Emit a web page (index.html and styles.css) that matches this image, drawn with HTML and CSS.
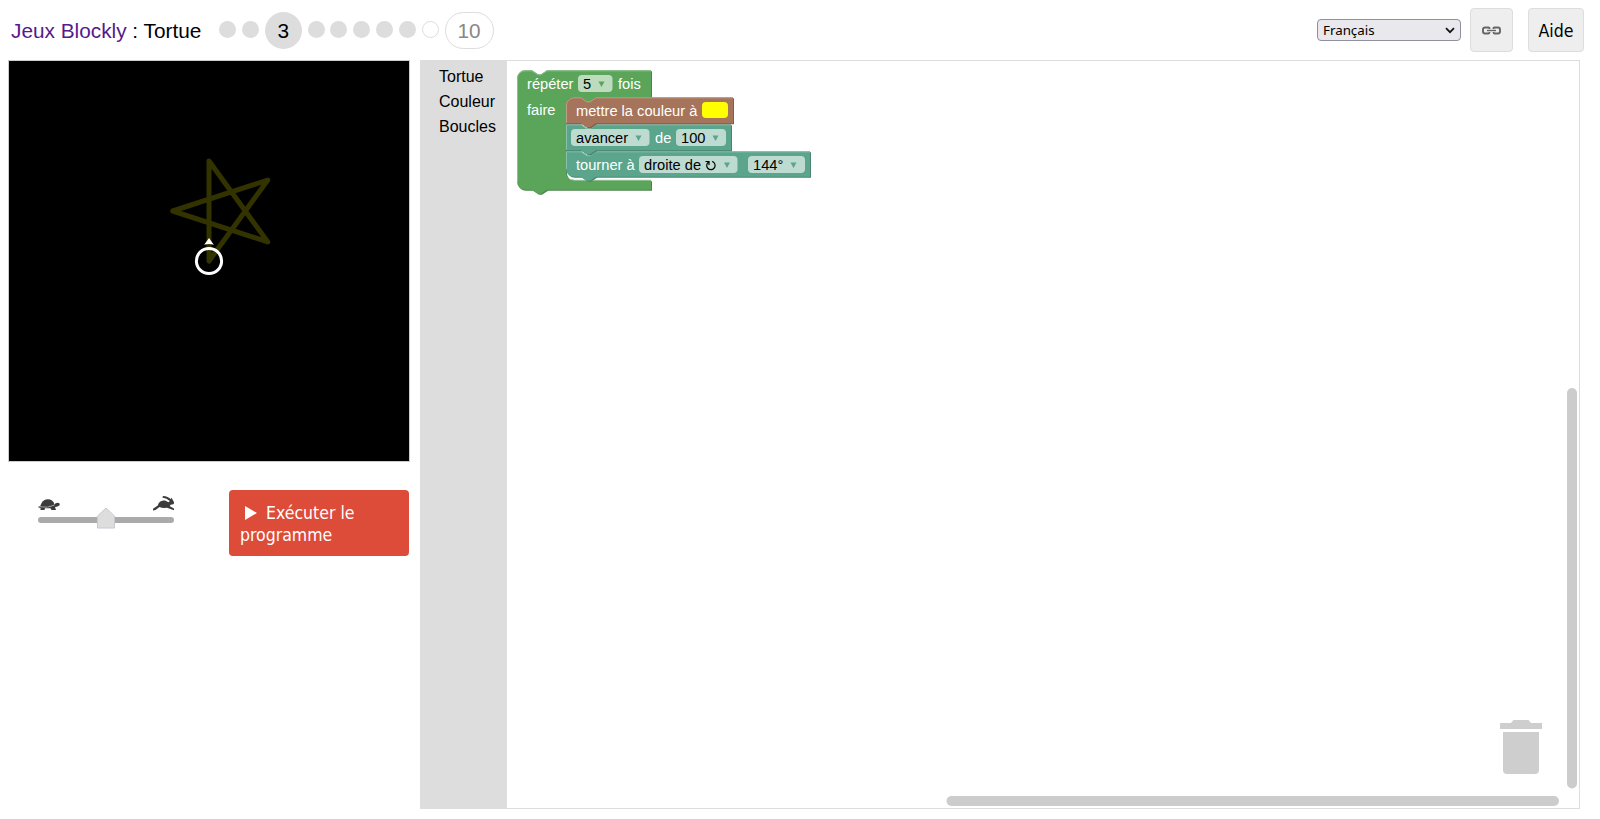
FILE: index.html
```html
<!DOCTYPE html>
<html lang="fr">
<head>
<meta charset="utf-8">
<title>Jeux Blockly : Tortue</title>
<link rel="stylesheet" href="styles.css">
</head>
<body>
<header class="header">
  <h1 class="title"><a class="home">Jeux Blockly</a> : Tortue</h1>
  <nav class="levels">
    <span class="dot"></span><span class="dot"></span>
    <span class="level current">3</span>
    <span class="dot"></span><span class="dot"></span><span class="dot"></span><span class="dot"></span><span class="dot"></span>
    <span class="dot open"></span>
    <span class="level last">10</span>
  </nav>
  <div class="tools">
    <div class="language"><span>Français</span>
      <svg width="10" height="7" viewBox="0 0 10 7"><path d="M1 1.2 5 5.2 9 1.2" fill="none" stroke="#111" stroke-width="1.7"/></svg>
    </div>
    <button class="button link" aria-label="Lien">
      <svg width="19" height="9" viewBox="0 0 19 9" fill="none" stroke="#666" stroke-width="1.900"><path d="M7.500 3V2.500Q7.500 1.500 6.500 1.500H3Q1 1.500 1 3.500V5.500Q1 7.500 3 7.500H6.500Q7.500 7.500 7.500 6M11.500 3V2.500Q11.500 1.500 12.500 1.500H16Q18 1.500 18 3.500V5.500Q18 7.500 16 7.500H12.500Q11.500 7.500 11.500 6"/><path d="M5 4.500H14" stroke-width="1.400"/></svg>
    </button>
    <button class="button help">Aide</button>
  </div>
</header>
<main class="main">
  <section class="stage">
    <svg class="canvas" width="400" height="400" viewBox="0 0 400 400">
      <path class="star" d="M200 200V100L258.8 180.9L163.7 150L258.8 119.1Z"/>
      <circle cx="200" cy="200" r="12.6" fill="none" stroke="#fff" stroke-width="3"/>
      <path d="M200 177 204.8 183.8Q200 182 195.2 183.8Z" fill="#fff"/>
    </svg>
    <div class="controls">
      <svg class="slider" width="150" height="50" viewBox="0 0 150 50">
        <path d="M10 27H140" stroke="#aaa" stroke-width="6" stroke-linecap="round"/>
        <path d="M66.500 35V23L75 15 83.500 23V35Z" fill="#ddd" stroke="#c8c6d2"/>
        <g fill="#3b3b3b"><path d="M9 13.500Q11 6.500 16.500 6.200Q22 6.200 23.500 11.500Q21 14 13 14.300Z"/><path d="M22.500 12.500Q24 9.800 26.500 9.800Q29.500 10.200 28.500 12.300Q27 14 24 14L25 17H20.500L19.500 15.300H14L13.500 17H9.500V15L7.500 14.500V13.300Q17 15.500 22.500 12.500Z"/></g>
        <path d="M9 13.800Q17 15.300 23.500 12" fill="none" stroke="#aaa" stroke-width=".8"/>
        <path fill="#3b3b3b" d="M127.500 10.500Q129.500 7 134 7.500L137.500 9.200 138.800 8Q136 5.500 131.300 4.600L132 3Q137 3.200 140 6.300L140.600 4.500 142 7.500Q144 10 142.300 11.200L139.500 11.800 138.800 13.300 143 15.500V17.200L136 14.800Q131 15.300 128.500 14L124.500 16.900 122 17.400V15.700L126.800 12.500Z"/>
      </svg>
      <button class="run"><svg width="14" height="16" viewBox="0 0 14 16"><path d="M1 1V15L13 8Z" fill="#fff"/></svg>Exécuter le programme</button>
    </div>
  </section>
  <section class="blockly">
    <ul class="toolbox"><li>Tortue</li><li>Couleur</li><li>Boucles</li></ul>
    <svg class="workspace" width="1072" height="747" viewBox="507 61 1072 747">
      <defs>
        <path id="loop" d="M517.500 78.500A8 8 0 0 1 525.500 70.500H532.500L538.500 74.500H541.500L547.500 70.500H651.500V97.500H596.500L590.500 101.500H587.500L581.500 97.500H574.500A8 8 0 0 0 566.500 105.500V172.500A8 8 0 0 0 574.500 180.500H651.500V190H547.500L541.500 194H538.500L532.500 190H525.500A8 8 0 0 1 517.500 182Z"/>
        <path id="colour" d="M566.500 105.500A8 8 0 0 1 574.500 97.500H581.500L587.500 101.500H590.500L596.500 97.500H733.500V123.500H596.500L590.500 127.500H587.500L581.500 123.500H566.500Z"/>
        <path id="move" d="M566.500 124.500H581.500L587.500 128.500H590.500L596.500 124.500H731.500V150.500H596.500L590.500 154.500H587.500L581.500 150.500H566.500Z"/>
        <path id="turn" d="M566.500 151.500H581.500L587.500 155.500H590.500L596.500 151.500H810.500V177H596.500L590.500 181H587.500L581.500 177H574.500A8 8 0 0 1 566.500 169Z"/>
      </defs>
      <g transform="translate(-.5 -.2)">
      <use href="#loop" x="1" y="1" fill="#498449"/><use href="#loop" fill="#5ba55b"/>
      <path class="shine" stroke="#8cc08c" d="M518 182V78.500A7.500 7.500 0 0 1 525.500 71H532.500L538.500 75H541.500L547.500 71H651.500M572 179.500L574.500 180.500H651.500"/>
      <use href="#turn" x="1" y="1" fill="#498470"/><use href="#turn" fill="#5ba58c"/>
      <path class="shine" stroke="#8cc0ae" d="M567 169V152H581.500L587.500 156H590.500L596.500 152H810.500"/>
      <use href="#move" x="1" y="1" fill="#498470"/><use href="#move" fill="#5ba58c"/>
      <path class="shine" stroke="#8cc0ae" d="M567 150V125H581.500L587.500 129H590.500L596.500 125H731.500"/>
      <use href="#colour" x="1" y="1" fill="#845d49"/><use href="#colour" fill="#a5745b"/>
      <path class="shine" stroke="#c09e8c" d="M567 123V105.500A7.500 7.500 0 0 1 574.500 98H581.500L587.500 102H590.500L596.500 98H733.500"/>
      </g>
      <g fill="#fff" fill-opacity=".6">
        <rect x="578" y="75" width="34.500" height="17" rx="4"/>
        <rect x="571" y="129" width="78.500" height="17" rx="4"/>
        <rect x="676" y="129" width="50" height="17" rx="4"/>
        <rect x="639" y="156" width="98.500" height="17" rx="4"/>
        <rect x="748" y="156" width="57" height="17" rx="4"/>
      </g>
      <rect x="702" y="102" width="26" height="16" rx="4" fill="#ff0"/>
      <g class="label">
        <text x="527" y="89">répéter</text><text x="618" y="89">fois</text>
        <text x="527" y="115">faire</text>
        <text x="576" y="116">mettre la couleur à</text>
        <text x="655" y="143">de</text><text x="576" y="170">tourner à</text>
      </g>
      <g class="value">
        <text x="583" y="89">5</text><text x="576" y="143">avancer</text><text x="681" y="143">100</text>
        <text x="644" y="170">droite de</text><text x="753" y="170">144°</text>
      </g>
      <path d="M705.500 161.500H709V165M708.500 162A4.200 4.200 0 1 0 713.300 162L712 161.500" fill="none" stroke="#000" stroke-width="1.200"/>
      <path fill="#5ba55b" d="M598.500 81.500H604.500L601.500 87Z"/>
      <path fill="#5ba58c" d="M635.500 135.500H641.500L638.500 141ZM712.500 135.500H718.500L715.500 141ZM724 162.500H730L727 168ZM790.500 162.500H796.500L793.500 168Z"/>
      <path fill="#cecece" d="M1500 723H1511L1513.500 720H1528.500L1531 723H1542V729H1500ZM1503 732H1539V770A4 4 0 0 1 1535 774H1507A4 4 0 0 1 1503 770Z"/>
      <rect x="1567" y="388" width="10" height="400.500" rx="5" fill="#ccc"/>
      <rect x="946.500" y="796" width="612.500" height="10" rx="5" fill="#ccc"/>
    </svg>
  </section>
</main>
</body>
</html>
```
FILE: styles.css
```css
* { box-sizing: border-box; }
body { margin: 0; height: 819px; overflow: hidden; background: #fff; color: #000; font-family: "Liberation Sans", Arial, sans-serif; }
.header { height: 60px; padding: 0 16px 0 11px; display: flex; align-items: center; }
.title { margin: 1px 0 0; width: 208px; font-size: 20.8px; font-weight: 400; white-space: nowrap; }
.home { color: #551a8b; }
.levels { display: flex; align-items: center; gap: 5.85px; }
.dot { width: 17px; height: 17px; margin-top: -1px; border-radius: 50%; background: #ddd; }
.dot.open { background: #fff; border: 1px solid #ddd; }
.level { height: 37px; border-radius: 18.5px; display: flex; align-items: center; justify-content: center; font-size: 20.8px; margin-top: 1px; }
.current { width: 37px; background: #ddd; }
.last { width: 49px; border: 1px solid #ddd; color: #888; }
.tools { margin-left: auto; display: flex; align-items: center; }
.language { width: 144px; height: 22px; border: 1px solid #8f8f9d; border-radius: 4px; background: #e9e9ed; display: flex; align-items: center; justify-content: space-between; padding: 0 5px; font: 13.33px "Noto Sans", sans-serif; margin-right: 9px; }
.button { height: 44px; padding: 0; border: 1px solid #ddd; border-radius: 4px; background: #eee; display: flex; align-items: center; justify-content: center; font: 17.6px "DejaVu Sans Condensed", "DejaVu Sans", sans-serif; font-stretch: condensed; color: #000; }
.link { width: 43px; margin-right: 15px; }
.help { width: 56px; padding-top: 2px; }
.main { display: flex; gap: 10px; padding-left: 8px; }
.stage { width: 402px; }
.canvas { display: block; box-sizing: content-box; border: 1px solid #ccc; background: #000; }
.star { fill: none; stroke: #333300; stroke-width: 5; stroke-linecap: round; stroke-linejoin: round; }
.controls { display: flex; justify-content: space-between; padding: 28px 1px 0 23px; }
.slider { margin-top: 3px; }
.run { width: 180px; height: 66px; padding: 2px 11px 0; border: 0; border-radius: 4px; background: #dd4b39; color: #fff; text-align: left; font: 17.5px/22px "DejaVu Sans Condensed", "DejaVu Sans", sans-serif; font-stretch: condensed; }
.run svg { margin: 0 8px -2px 4px; }
.blockly { width: 1160px; height: 749px; display: flex; border: 1px solid #ddd; }
.toolbox { width: 87px; height: 749px; margin: -1px 0 0 -1px; padding: 4px 0 0 19px; list-style: none; background: #ddd; font-size: 16px; line-height: 25px; flex: none; }
.workspace { display: block; flex: none; }
.shine { fill: none; stroke-width: 1; }
.label, .value { font: 14.67px "Liberation Sans", Arial, sans-serif; }
.label { fill: #fff; }
.value { fill: #000; }
```
